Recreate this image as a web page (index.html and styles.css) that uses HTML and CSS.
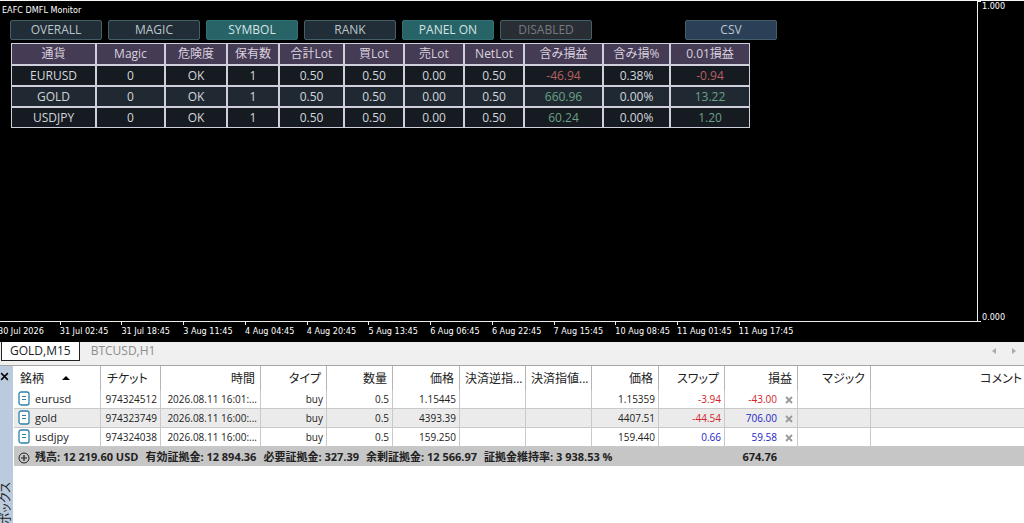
FILE: index.html
```html
<!DOCTYPE html>
<html lang="ja">
<head>
<meta charset="utf-8">
<title>EAFC DMFL Monitor</title>
<link rel="stylesheet" href="styles.css">
</head>
<body>
<svg width="0" height="0" class="defs">
	<symbol id="doc" viewBox="0 0 12 15">
		<rect x="1" y="1" width="10" height="13" rx="2" fill="#fff" stroke="#2d80a8" stroke-width="1.3"/>
		<path d="M4 5.500h4M4 8.500h4" stroke="#2d80a8" stroke-width="1.2"/>
	</symbol>
	<symbol id="cross" viewBox="0 0 8 8">
		<path d="M1 1l6 6M7 1l-6 6" stroke="currentColor" stroke-width="1.800"/>
	</symbol>
</svg>

<main class="chart">
	<div class="plot">
		<h1>EAFC DMFL Monitor</h1>
		<div class="buttons">
			<button type="button">OVERALL</button>
			<button type="button">MAGIC</button>
			<button type="button" class="on">SYMBOL</button>
			<button type="button">RANK</button>
			<button type="button" class="on">PANEL ON</button>
			<button type="button" class="off" disabled>DISABLED</button>
			<button type="button" class="csv">CSV</button>
		</div>
		<table class="monitor">
			<colgroup><col class="w85"><col class="w69"><col class="w62"><col class="w52"><col class="w65"><col class="w60"><col class="w60"><col class="w60"><col class="w79"><col class="w67"><col class="w80"></colgroup>
			<thead>
				<tr><th>通貨</th><th>Magic</th><th>危険度</th><th>保有数</th><th>合計Lot</th><th>買Lot</th><th>売Lot</th><th>NetLot</th><th>含み損益</th><th>含み損%</th><th>0.01損益</th></tr>
			</thead>
			<tbody>
				<tr><td>EURUSD</td><td>0</td><td>OK</td><td>1</td><td>0.50</td><td>0.50</td><td>0.00</td><td>0.50</td><td class="minus">-46.94</td><td>0.38%</td><td class="minus">-0.94</td></tr>
				<tr><td>GOLD</td><td>0</td><td>OK</td><td>1</td><td>0.50</td><td>0.50</td><td>0.00</td><td>0.50</td><td class="plus">660.96</td><td>0.00%</td><td class="plus">13.22</td></tr>
				<tr><td>USDJPY</td><td>0</td><td>OK</td><td>1</td><td>0.50</td><td>0.50</td><td>0.00</td><td>0.50</td><td class="plus">60.24</td><td>0.00%</td><td class="plus">1.20</td></tr>
			</tbody>
		</table>
	</div>
	<div class="scale"><span>1.000</span><span>0.000</span></div>
	<div class="times">
		<span>30 Jul 2026</span><span>31 Jul 02:45</span><span>31 Jul 18:45</span><span>3 Aug 11:45</span><span>4 Aug 04:45</span><span>4 Aug 20:45</span><span>5 Aug 13:45</span><span>6 Aug 06:45</span><span>6 Aug 22:45</span><span>7 Aug 15:45</span><span>10 Aug 08:45</span><span>11 Aug 01:45</span><span>11 Aug 17:45</span>
	</div>
</main>

<nav class="tabs">
	<a href="#gold" class="active">GOLD,M15</a>
	<a href="#btc">BTCUSD,H1</a>
	<div class="arrows">
		<button type="button" aria-label="前へ"><svg width="4" height="6" viewBox="0 0 4 6"><path d="M4 0v6L0 3z"/></svg></button>
		<button type="button" aria-label="次へ"><svg width="4" height="6" viewBox="0 0 4 6"><path d="M0 0v6l4-3z"/></svg></button>
	</div>
</nav>

<section class="toolbox">
	<aside class="side">
		<button type="button" aria-label="閉じる"><svg width="9" height="9" viewBox="0 0 8 8"><path d="M1 1l6 6M7 1l-6 6" stroke="#000" stroke-width="1.300"/></svg></button>
		<span>ツールボックス</span>
	</aside>
	<div class="list">
		<table class="trades">
			<colgroup><col class="w87"><col class="w60"><col class="w100"><col class="w66"><col class="w66"><col class="w67"><col class="w66"><col class="w66"><col class="w67"><col class="w66"><col class="w73"><col class="w73"><col></colgroup>
			<thead>
				<tr><th class="left">銘柄<svg class="sort" width="8" height="4" viewBox="0 0 8 4"><path d="M0 4l4-4 4 4z"/></svg></th><th class="left">チケット</th><th>時間</th><th>タイプ</th><th>数量</th><th>価格</th><th>決済逆指...</th><th>決済指値...</th><th>価格</th><th>スワップ</th><th>損益</th><th>マジック</th><th class="last">コメント</th></tr>
			</thead>
			<tbody>
				<tr><td class="name"><svg width="12" height="15"><use href="#doc"/></svg>eurusd</td><td>974324512</td><td>2026.08.11 16:01:...</td><td>buy</td><td>0.5</td><td>1.15445</td><td></td><td></td><td>1.15359</td><td class="red">-3.94</td><td class="red profit">-43.00<button type="button" aria-label="決済"><svg width="8" height="8"><use href="#cross"/></svg></button></td><td></td><td></td></tr>
				<tr><td class="name"><svg width="12" height="15"><use href="#doc"/></svg>gold</td><td>974323749</td><td>2026.08.11 16:00:...</td><td>buy</td><td>0.5</td><td>4393.39</td><td></td><td></td><td>4407.51</td><td class="red">-44.54</td><td class="blue profit">706.00<button type="button" aria-label="決済"><svg width="8" height="8"><use href="#cross"/></svg></button></td><td></td><td></td></tr>
				<tr><td class="name"><svg width="12" height="15"><use href="#doc"/></svg>usdjpy</td><td>974324038</td><td>2026.08.11 16:00:...</td><td>buy</td><td>0.5</td><td>159.250</td><td></td><td></td><td>159.440</td><td class="blue">0.66</td><td class="blue profit">59.58<button type="button" aria-label="決済"><svg width="8" height="8"><use href="#cross"/></svg></button></td><td></td><td></td></tr>
			</tbody>
			<tfoot>
				<tr>
					<td colspan="10" class="name"><svg width="12" height="12" viewBox="0 0 12 12"><circle cx="6" cy="6" r="5" fill="none" stroke="#222"/><path d="M3 6h6M6 3v6" stroke="#222" stroke-width="1.200"/></svg><span>残高: 12 219.60 USD</span><span>有効証拠金: 12 894.36</span><span>必要証拠金: 327.39</span><span>余剰証拠金: 12 566.97</span><span>証拠金維持率: 3 938.53 %</span></td>
					<td class="total">674.76</td><td></td><td></td>
				</tr>
			</tfoot>
		</table>
	</div>
</section>
</body>
</html>
```

FILE: styles.css
```css
*{ margin:0; padding:0; box-sizing:border-box;}
html, body{ height:100%;}
body{ display:flex; flex-direction:column; overflow:hidden; background:#fff; color:#222; font:12px/18px "Open Sans","Noto Sans CJK JP",sans-serif;}
button{ font:inherit; color:inherit; border:0; background:none;}
a{ color:inherit; text-decoration:none;}
table{ table-layout:fixed; border-spacing:0;}
th{ font-weight:normal;}
.defs{ position:absolute;}

.w52{ width:52px;}
.w60{ width:60px;}
.w62{ width:62px;}
.w65{ width:65px;}
.w66{ width:66px;}
.w67{ width:67px;}
.w69{ width:69px;}
.w73{ width:73px;}
.w79{ width:79px;}
.w80{ width:80px;}
.w85{ width:85px;}
.w87{ width:87px;}
.w100{ width:100px;}

/* chart */
.chart{ flex:none; display:grid; grid-template-columns:1fr 46px; grid-template-rows:1fr 20px; min-height:342px; border-top:1px solid #f4f6f6; background:#000; color:#fff;}
.plot{ border-right:1px solid #eee; border-bottom:1px solid #eee;}
.plot h1{ padding:3px 2px 1px; font:9px/12px "DejaVu Sans Condensed","Open Sans",sans-serif;}
.buttons{ display:flex; gap:6px; padding:3px 10px;}
.buttons button{ width:92px; height:20px; border:1px solid #43606a; border-radius:2px; background:#212d37; color:#bcc6ca; line-height:18px;}
.buttons .on{ background:#286367; border-color:#2f7175; color:#d5e4e4;}
.buttons .off{ background:#292e35; color:#757b80;}
.buttons .csv{ margin-left:87px; background:#2b3f57;}
.monitor{ width:739px; margin-left:11px; border:0; color:#d3d6da; text-align:center;}
.monitor th, .monitor td{ height:21px; border:1px solid #d0cfdc; line-height:18px;}
.monitor th{ height:22px; background:#463b55; color:#d9d2df;}
.monitor td{ background:#161b22;}
.monitor tr:nth-child(2) td{ background:#202932;}
.monitor .minus{ color:#b5605f;}
.monitor .plus{ color:#6aa184;}
.scale{ display:flex; flex-direction:column; justify-content:space-between; font:9px/10px "DejaVu Sans Condensed","Open Sans",sans-serif;}
.scale span::before{ content:""; display:inline-block; width:3px; height:1px; margin-right:1px; background:#eee; vertical-align:top;}
.scale span:last-child::before{ vertical-align:bottom;}
.times{ display:flex; margin-left:-2px; font:9px/12px "DejaVu Sans Condensed","Open Sans",sans-serif; white-space:nowrap;}
.times span{ flex:none; width:6.3%;}
.times span::before{ content:""; display:block; width:1px; height:3px; background:#eee;}
.times span:first-child::before{ background:none;}

/* chart tabs */
.tabs{ flex:none; display:flex; align-items:flex-start; height:23px; padding-left:1px; background:#f0f0f0; color:#8c8c8c;}
.tabs a{ padding:0 11px; line-height:18px;}
.tabs .active{ padding:0 8px; border:1px solid #222; border-top:0; background:#fff; color:#222;}
.arrows{ display:flex; gap:16px; margin-left:auto; padding:6px 8px 0 0; fill:#aaa;}
.arrows button{ display:block; line-height:0;}

/* toolbox */
.toolbox{ flex:1; display:flex; min-height:0; border-top:1px solid #a5a5a5;}
.side{ display:flex; flex-direction:column; align-items:flex-start; width:13px; overflow:hidden; background:#bacbdd;}
.side button{ padding:6px 0 0; line-height:0;}
.side span{ flex:none; margin-top:101px; writing-mode:vertical-rl; text-orientation:sideways; transform:rotate(180deg); line-height:11px; font-feature-settings:"palt"; white-space:nowrap;}
.list{ flex:1; min-width:0; padding-left:1px;}
.trades{ width:100%; font-size:10px; text-align:right; white-space:nowrap;}
.trades th{ height:24px; padding:0 5px; border-right:1px solid #b5b5b5; font-size:12px; line-height:23px; font-feature-settings:"palt";}
.trades .left{ padding-left:6px; text-align:left;}
.trades .last{ padding-right:2px; border-right:0;}
.sort{ margin-left:18px; vertical-align:3px;}
.trades td{ height:19px; padding:0 3px; border-right:1px solid #c9c9c9; border-bottom:1px solid #c9c9c9; line-height:18px;}
.trades td:last-child{ border-right:0;}
.trades tbody tr:nth-child(2) td{ background:#ebebeb;}
.trades .name{ padding-left:4px; font-size:11px; line-height:18px; text-align:left;}
.trades .name svg{ margin-right:5px; vertical-align:-3px;}
.trades .red{ color:#d3232b;}
.trades .blue{ color:#2425c8;}
.profit button{ margin:0 1px 0 8px; color:#999; line-height:0; vertical-align:middle;}
.trades tfoot td{ border:0; background:#c6c6c6; color:#222; font-size:11px; font-weight:bold;}
.trades tfoot span{ margin-right:7px;}
.trades .total{ padding-right:21px;}
```
